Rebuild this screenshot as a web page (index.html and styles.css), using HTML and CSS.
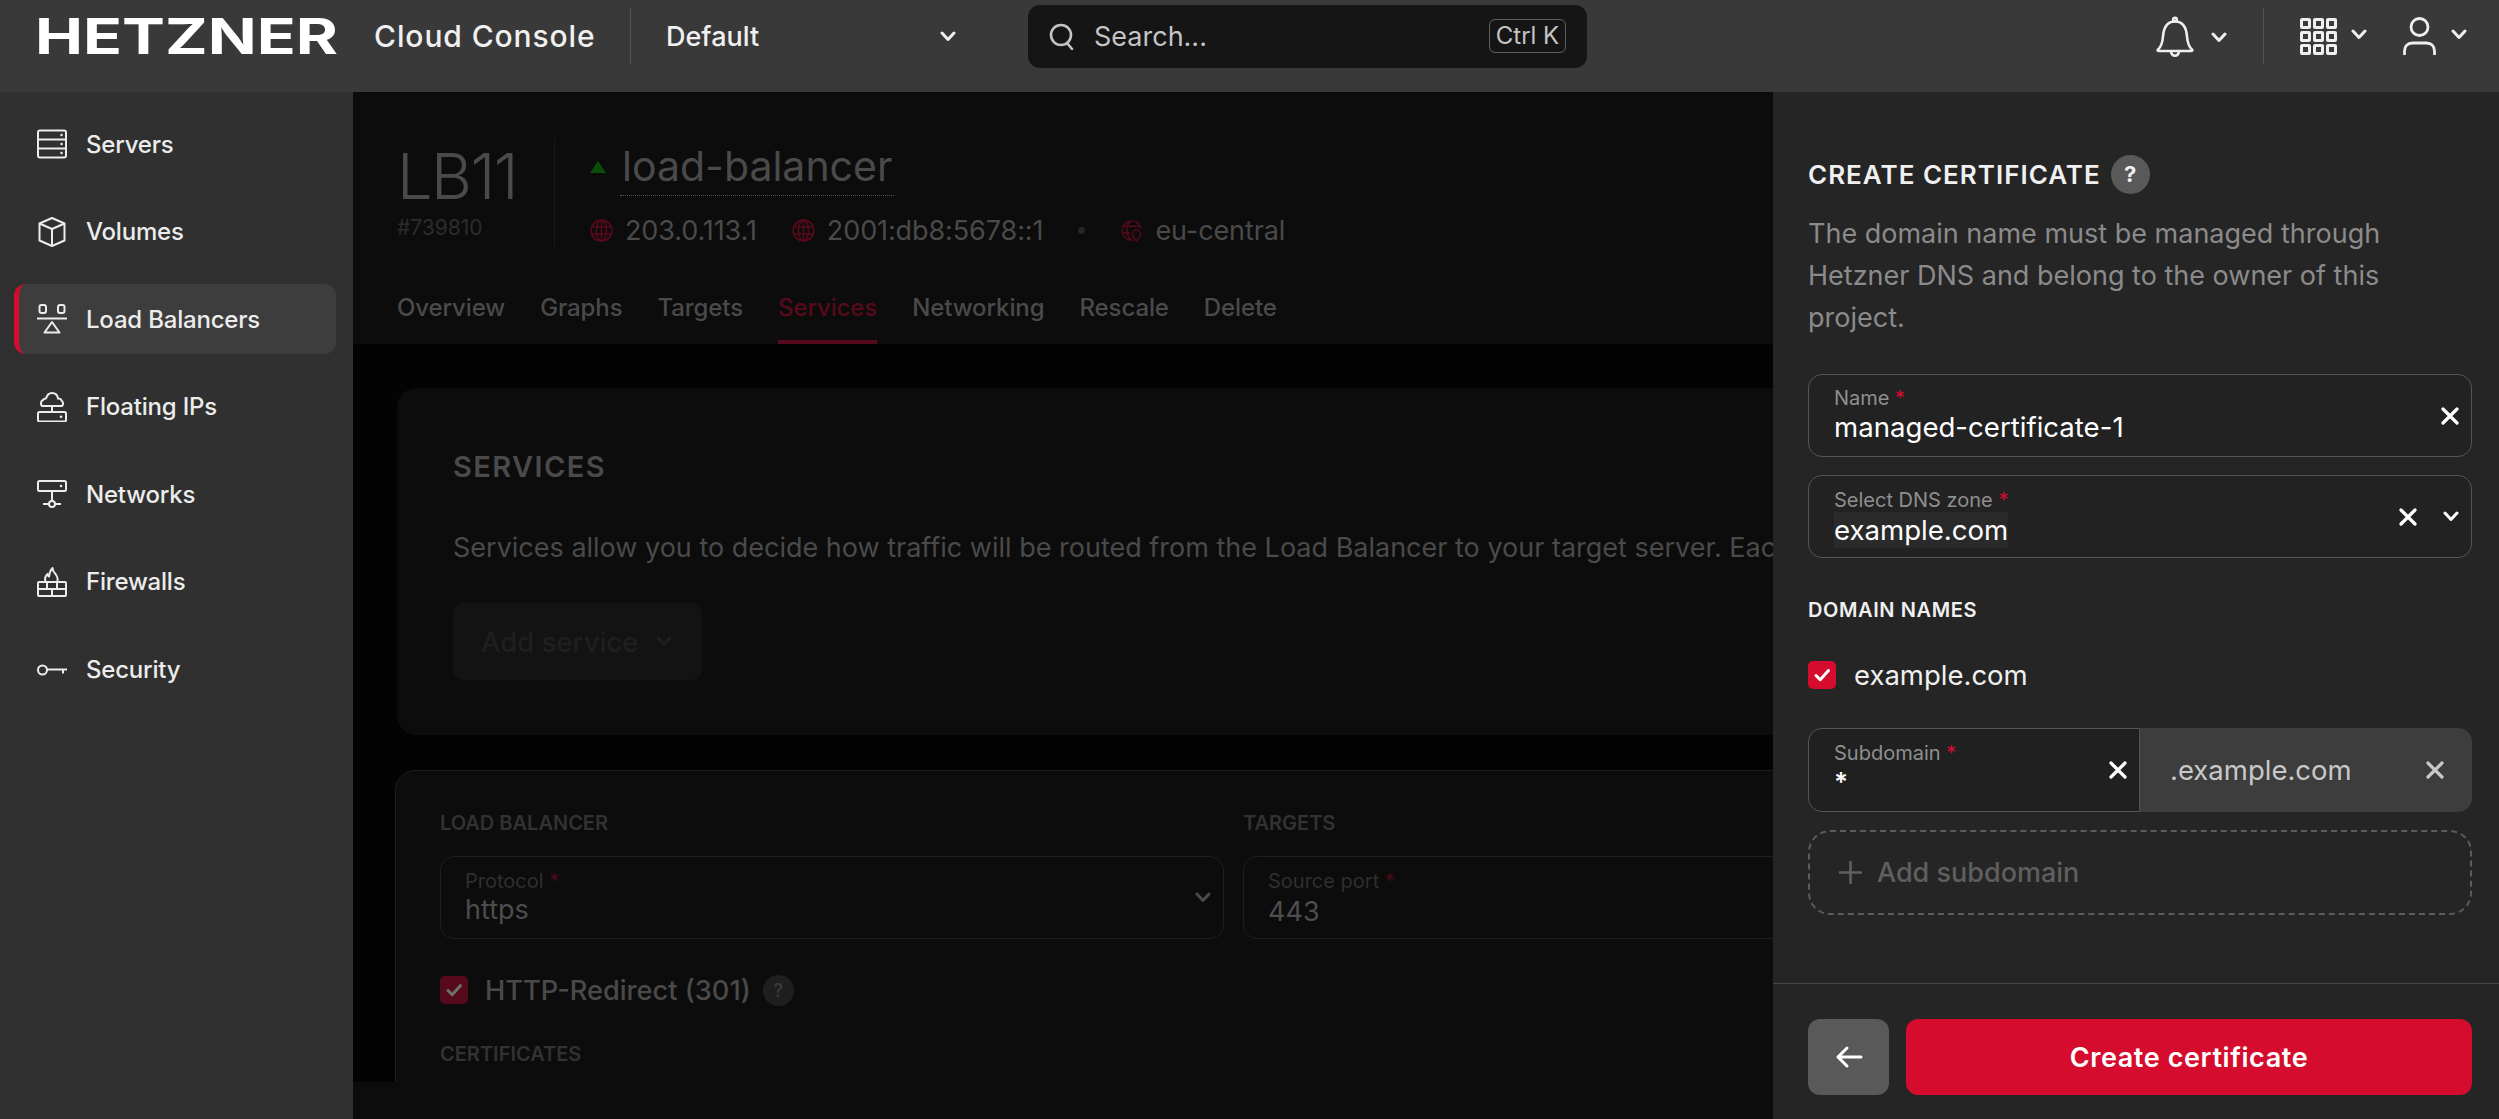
FILE: index.html
```html
<!DOCTYPE html>
<html lang="en">
<head>
  <meta charset="UTF-8">
  <title>Hetzner Cloud Console</title>
  <link rel="stylesheet" href="styles.css">
</head>
<body>
  <svg class="sprite" width="0" height="0">
    <symbol id="chev" viewBox="0 0 16 11"><path d="M2 2l6 6.5L14 2" fill="none" stroke="currentColor" stroke-width="3" stroke-linecap="round" stroke-linejoin="round"/></symbol>
    <symbol id="cross" viewBox="0 0 18 18"><path d="M2 2l14 14M16 2L2 16" fill="none" stroke="currentColor" stroke-width="3.2" stroke-linecap="round"/></symbol>
    <symbol id="tick" viewBox="0 0 28 28"><path d="M8 14.5l4.2 4.2L20.5 9.5" fill="none" stroke="currentColor" stroke-width="3" stroke-linecap="round" stroke-linejoin="round"/></symbol>
    <symbol id="globe" viewBox="0 0 23 23"><g fill="none" stroke="currentColor" stroke-width="1.6"><circle cx="11.5" cy="11.5" r="10.4"/><ellipse cx="11.5" cy="11.5" rx="5" ry="10.4"/><path d="M11.5 1v21M1.5 8h20M1.5 15h20"/></g></symbol>
  </svg>

  <header class="topbar">
    <svg class="logo" viewBox="0 0 303 36"><text x="0" y="36" textLength="303" lengthAdjust="spacingAndGlyphs">HETZNER</text></svg>
    <div class="product">Cloud Console</div>
    <div class="vline"></div>
    <div class="project">
      <span>Default</span>
      <svg class="chev"><use href="#chev"/></svg>
    </div>
    <div class="search">
      <svg class="search-icon" viewBox="0 0 26 27" fill="none" stroke="currentColor" stroke-width="2.6" stroke-linecap="round"><circle cx="12" cy="12" r="10"/><path d="M18 20l5 6"/></svg>
      <span class="search-text">Search...</span>
      <span class="kbd">Ctrl K</span>
    </div>
    <div class="top-right">
      <div class="top-group bell-group">
        <svg class="bell" viewBox="0 0 38 41" fill="none" stroke="currentColor" stroke-width="2.6" stroke-linejoin="round"><path d="M2 33.5c3.500-3 4.500-7 5-13C7.700 11 11 5.500 19 5.500S30.300 11 31 20.500c.5 6 1.500 10 5 13 .7.8.2 1.500-.8 1.500H2.800c-1 0-1.500-.7-.8-1.500z"/><path d="M15 36c.5 2.500 2 3.700 4 3.700s3.500-1.200 4-3.700"/><circle cx="19" cy="3.500" r="1.800"/></svg>
        <svg class="chev"><use href="#chev"/></svg>
      </div>
      <div class="vline"></div>
      <div class="top-group apps">
        <div class="app-grid">
          <i></i><i></i><i></i><i></i><i></i><i></i><i></i><i></i><i></i>
        </div>
        <svg class="chev"><use href="#chev"/></svg>
      </div>
      <div class="top-group">
        <svg class="user" viewBox="0 0 33 38" fill="none" stroke="currentColor" stroke-width="2.8" stroke-linecap="round"><circle cx="16.500" cy="10" r="8.500"/><path d="M1.500 37v-3c0-5 3-8 8-8h14c5 0 8 3 8 8v3"/></svg>
        <svg class="chev"><use href="#chev"/></svg>
      </div>
    </div>
  </header>

  <div class="layout">
    <nav class="sidebar">
      <a class="nav-item">
        <svg class="nav-icon" viewBox="0 0 30 30" fill="none" stroke="currentColor" stroke-width="2"><rect x="1" y="1.500" width="28" height="27" rx="2"/><path d="M1 10.500h28M1 19.500h28"/><path d="M24.500 6h.1M24.500 15h.1M24.500 24h.1" stroke-width="2.400" stroke-linecap="round"/></svg>
        Servers
      </a>
      <a class="nav-item">
        <svg class="nav-icon" viewBox="0 0 30 30" fill="none" stroke="currentColor" stroke-width="2" stroke-linejoin="round"><path d="M15 1l12.500 5.500v17L15 29 2.500 23.500v-17z"/><path d="M2.500 6.500L15 12l12.500-5.500M15 12v17"/></svg>
        Volumes
      </a>
      <a class="nav-item active">
        <svg class="nav-icon" viewBox="0 0 30 30" fill="none" stroke="currentColor" stroke-width="2"><rect x="2.500" y="1" width="6.500" height="8" rx="2"/><rect x="21" y="1" width="6.500" height="8" rx="2"/><path d="M0 14.500h30"/><path d="M15 18l7.500 10.500h-15z" stroke-linejoin="round"/></svg>
        Load Balancers
      </a>
      <a class="nav-item">
        <svg class="nav-icon" viewBox="0 0 30 30" fill="none" stroke="currentColor" stroke-width="2" stroke-linejoin="round"><path d="M5 14c-2-2-1-5 1-6 .5-1 1.500-1.500 3-1.500C10 3 12.500 1 15 1c3 0 5.500 2 6 5.500 2 0 3 .5 3.500 2 2 1.500 2 4 .5 5.500z"/><path d="M15 14v6"/><rect x="1" y="20" width="28" height="9.500" rx="1.500"/><path d="M24 24.700h.1" stroke-width="2.500" stroke-linecap="round"/></svg>
        Floating IPs
      </a>
      <a class="nav-item">
        <svg class="nav-icon" viewBox="0 0 30 30" fill="none" stroke="currentColor" stroke-width="2"><rect x="1" y="2" width="28" height="10" rx="1.500"/><path d="M24 7h.1" stroke-width="2.500" stroke-linecap="round"/><path d="M15 12v10M6 25h6M18 25h6"/><circle cx="15" cy="25" r="3"/></svg>
        Networks
      </a>
      <a class="nav-item">
        <svg class="nav-icon" viewBox="0 0 30 30" fill="none" stroke="currentColor" stroke-width="2" stroke-linejoin="round"><rect x="1" y="15" width="28" height="14" rx="1"/><path d="M1 22h28M10 15v7M20 15v7M15 22v7"/><path d="M9 15c-2-3-.5-6 1.500-8 0 1.500.5 2 1.500 2.500C12.500 6 13.500 3 15.500 1c0 3 1 4 3 6 2 2.500 3 5 1.500 8"/></svg>
        Firewalls
      </a>
      <a class="nav-item">
        <svg class="nav-icon" viewBox="0 0 30 30" fill="none" stroke="currentColor" stroke-width="2"><circle cx="5.500" cy="15" r="4.500"/><path d="M10 14.500h20M26 14.500v4"/></svg>
        Security
      </a>
    </nav>

    <main class="main">
      <section class="lb-header">
        <div class="lb-top">
          <div class="lb-type">
            <div class="lb-model">LB11</div>
            <div class="lb-id">#739810</div>
          </div>
          <div class="lb-info">
            <div class="lb-name-row">
              <span class="status-up"></span>
              <span class="lb-name">load-balancer</span>
            </div>
            <div class="lb-meta">
              <svg class="globe"><use href="#globe"/></svg>
              <span>203.0.113.1</span>
              <svg class="globe second"><use href="#globe"/></svg>
              <span>2001:db8:5678::1</span>
              <span class="meta-dot"></span>
              <svg class="globe" viewBox="0 0 23 25" fill="none" stroke="currentColor" stroke-width="1.600"><path d="M13 23a10.500 10.500 0 1 1 9-13M11 1.500c-6 5-6 16 0 21M1.500 8h19M1.500 15h8"/><path d="M17 24c-3-3.500-4.500-5.500-4.500-7.500a4.500 4.500 0 0 1 9 0c0 2-1.500 4-4.500 7.500z"/></svg>
              <span>eu-central</span>
            </div>
          </div>
        </div>
        <div class="tabs">
          <a class="tab">Overview</a>
          <a class="tab">Graphs</a>
          <a class="tab">Targets</a>
          <a class="tab active">Services</a>
          <a class="tab">Networking</a>
          <a class="tab">Rescale</a>
          <a class="tab">Delete</a>
        </div>
      </section>

      <section class="content">
        <div class="services-card">
          <h2 class="services-title">SERVICES</h2>
          <p class="services-text">Services allow you to decide how traffic will be routed from the Load Balancer to your target server. Each</p>
          <div class="add-service">
            Add service
            <svg class="chev"><use href="#chev"/></svg>
          </div>
        </div>

        <div class="service-card">
          <div class="service-cols">
            <div>
              <div class="service-head">LOAD BALANCER</div>
              <div class="dim-field">
                <div class="dim-text">
                  <div class="dim-label">Protocol <b>*</b></div>
                  <div class="dim-value">https</div>
                </div>
                <svg class="chev"><use href="#chev"/></svg>
              </div>
            </div>
            <div>
              <div class="service-head">TARGETS</div>
              <div class="dim-field">
                <div class="dim-text">
                  <div class="dim-label">Source port <b>*</b></div>
                  <div class="dim-value port">443</div>
                </div>
              </div>
            </div>
          </div>
          <div class="redirect-row">
            <span class="dim-check"><svg viewBox="0 0 28 28"><use href="#tick"/></svg></span>
            <span>HTTP-Redirect (301)</span>
            <span class="dim-help">?</span>
          </div>
          <div class="service-head certs">CERTIFICATES</div>
        </div>
      </section>

      <div class="main-foot"></div>
    </main>

    <aside class="panel">
      <div class="panel-body">
        <div class="panel-title">
          <h2>CREATE CERTIFICATE</h2>
          <span class="help">?</span>
        </div>
        <p class="panel-text">The domain name must be managed through Hetzner DNS and belong to the owner of this project.</p>

        <div class="field">
          <div class="field-text">
            <div class="field-label">Name <b>*</b></div>
            <div class="field-value name-value">managed-certificate-1</div>
          </div>
          <svg class="cross"><use href="#cross"/></svg>
        </div>

        <div class="field dns">
          <div class="field-text">
            <div class="field-label">Select DNS zone <b>*</b></div>
            <div class="field-value"><span class="picked">example.com</span></div>
          </div>
          <svg class="cross"><use href="#cross"/></svg>
          <svg class="chev"><use href="#chev"/></svg>
        </div>

        <h3 class="domain-head">DOMAIN NAMES</h3>

        <div class="check-row">
          <span class="check"><svg viewBox="0 0 28 28"><use href="#tick"/></svg></span>
          <span>example.com</span>
        </div>

        <div class="sub-row">
          <div class="field sub-field">
            <div class="field-text">
              <div class="field-label">Subdomain <b>*</b></div>
              <div class="field-value star">*</div>
            </div>
            <svg class="cross"><use href="#cross"/></svg>
          </div>
          <div class="sub-suffix">
            <span>.example.com</span>
            <svg class="cross"><use href="#cross"/></svg>
          </div>
        </div>

        <div class="add-sub">
          <svg class="plus" viewBox="0 0 25 25"><path d="M12.500 1v23M1 12.500h23" fill="none" stroke="currentColor" stroke-width="2.600"/></svg>
          Add subdomain
        </div>
      </div>

      <div class="panel-foot">
        <button class="btn-back">
          <svg viewBox="0 0 28 24" fill="none" stroke="currentColor" stroke-width="3" stroke-linecap="round" stroke-linejoin="round"><path d="M26 12H3M12 3l-9 9 9 9"/></svg>
        </button>
        <button class="btn-create">Create certificate</button>
      </div>
    </aside>
  </div>
</body>
</html>
```

FILE: styles.css
```css
* {
  box-sizing: border-box;
}

html, body {
  margin: 0;
  height: 100%;
  overflow: hidden;
}

body {
  font-family: Inter, "Liberation Sans", sans-serif;
  background: #0d0d0d;
  color: #f0f0f0;
  display: flex;
  flex-direction: column;
}

h2, h3, p {
  margin: 0;
}

.sprite {
  position: absolute;
}

.chev {
  width: 16px;
  height: 11px;
  flex: none;
}

/* top bar */
.topbar {
  height: 92px;
  flex: none;
  padding-bottom: 20px;
  background: #393939;
  display: flex;
  align-items: center;
}

.logo {
  margin-left: 35px;
  width: 303px;
  height: 36px;
  flex: none;
  overflow: visible;
}

.logo text {
  font-family: Inter, sans-serif;
  font-size: 49.5px;
  font-weight: 700;
  fill: #fff;
}

.product {
  margin-left: 36px;
  width: 221px;
  font-size: 30px;
  font-weight: 500;
  letter-spacing: 0.9px;
  white-space: nowrap;
}

.vline {
  width: 1px;
  height: 56px;
  background: #565656;
  flex: none;
}

.topbar > .vline {
  margin-left: 35px;
}

.project {
  width: 397px;
  padding: 0 72px 0 35px;
  font-size: 27px;
  font-weight: 500;
  display: flex;
  justify-content: space-between;
  align-items: center;
}

.search {
  width: 559px;
  height: 63px;
  padding: 0 21px;
  background: #151515;
  border-radius: 12px;
  display: flex;
  align-items: center;
  color: #c4c4c4;
}

.search-icon {
  width: 26px;
  height: 27px;
}

.search-text {
  margin-left: 19px;
  font-size: 27px;
  flex: 1;
}

.kbd {
  width: 77px;
  height: 34px;
  border: 1px solid #5f5f5f;
  border-radius: 6px;
  font-size: 24px;
  line-height: 32px;
  text-align: center;
}

.top-right {
  margin-left: auto;
  padding-right: 32px;
  display: flex;
  align-items: center;
  gap: 36px;
}

.top-group {
  display: flex;
  align-items: center;
  gap: 15px;
  color: #efefef;
}

.top-group .chev {
  margin-top: -3px;
}

.top-group.bell-group {
  gap: 17px;
}

.top-group.bell-group .chev {
  margin-top: 3px;
}

.top-group.apps {
  gap: 14px;
}

.bell {
  width: 38px;
  height: 41px;
}

.app-grid {
  width: 37px;
  height: 37px;
  display: grid;
  grid-template-columns: repeat(3, 11px);
  grid-template-rows: repeat(3, 11px);
  justify-content: space-between;
  align-content: space-between;
}

.app-grid i {
  border: 3.5px solid #efefef;
  border-radius: 2px;
}

.user {
  width: 33px;
  height: 38px;
}

/* page layout */
.layout {
  flex: 1;
  min-height: 0;
  display: flex;
}

.sidebar {
  width: 353px;
  flex: none;
  padding: 17px 17px 0 14px;
  background: #303030;
  display: flex;
  flex-direction: column;
  gap: 17.6px;
}

.nav-item {
  height: 70px;
  padding-left: 18px;
  border-left: 5px solid transparent;
  border-radius: 12px;
  display: flex;
  align-items: center;
  gap: 19px;
  font-size: 24px;
  font-weight: 450;
  letter-spacing: -0.2px;
  color: #ececec;
}

.nav-item.active {
  background: #3d3d3d;
  border-left-color: #d50c2d;
}

.nav-icon {
  width: 30px;
  height: 30px;
  flex: none;
}

/* dimmed load balancer page */
.main {
  flex: 1;
  min-width: 0;
  display: flex;
  flex-direction: column;
  overflow: hidden;
  color: #4a4a4a;
}

.lb-header {
  height: 252px;
  flex: none;
  padding: 46px 0 0 44px;
  background: #0c0c0c;
}

.lb-top {
  display: flex;
  height: 109px;
}

.lb-type {
  width: 158px;
  flex: none;
  border-right: 1px solid #191919;
}

.lb-model {
  margin-top: 6px;
  height: 64px;
  font-size: 63px;
  line-height: 64px;
  font-weight: 300;
  letter-spacing: -1.5px;
}

.lb-id {
  margin-top: 8px;
  font-size: 21px;
  line-height: 24px;
  color: #2c2c2c;
}

.lb-info {
  padding-left: 35px;
  display: flex;
  flex-direction: column;
  gap: 17px;
}

.lb-name-row {
  height: 58px;
  display: flex;
  align-items: flex-start;
}

.status-up {
  width: 0;
  height: 0;
  margin: 23px 14px 0 0;
  border-left: 8px solid transparent;
  border-right: 8px solid transparent;
  border-bottom: 12px solid #0a4d0a;
}

.lb-name {
  height: 58px;
  padding: 0 2px;
  border-bottom: 1px dotted #555;
  font-size: 41px;
  line-height: 56px;
}

.lb-meta {
  height: 36px;
  display: flex;
  align-items: center;
  font-size: 27px;
  letter-spacing: -0.1px;
  white-space: nowrap;
}

.globe {
  width: 23px;
  height: 23px;
  flex: none;
  margin-right: 12px;
  color: #560a1b;
}

.globe.second {
  margin-left: 35px;
}

.meta-dot {
  width: 7px;
  height: 7px;
  margin: 0 35px;
  border-radius: 50%;
  background: #262626;
}

.tabs {
  margin-top: 25px;
  height: 72px;
  display: flex;
  gap: 35px;
}

.tab {
  height: 72px;
  font-size: 24px;
  font-weight: 500;
  letter-spacing: -0.1px;
  line-height: 72px;
}

.tab.active {
  color: #570a1b;
  border-bottom: 4px solid #570a1b;
}

.content {
  flex: 1;
  min-height: 0;
  padding: 44px 0 0 42px;
  background: #030303;
  overflow: hidden;
}

.services-card {
  width: 1500px;
  height: 347px;
  margin-left: 2px;
  padding: 62px 0 0 56px;
  background: #0c0c0c;
  border-radius: 20px;
}

.services-title {
  font-size: 29px;
  line-height: 34px;
  font-weight: 600;
  letter-spacing: 1.4px;
}

.services-text {
  margin-top: 44px;
  font-size: 27px;
  line-height: 40px;
  white-space: nowrap;
}

.add-service {
  width: 249px;
  height: 77px;
  margin-top: 35px;
  padding-left: 28px;
  background: #131313;
  border-radius: 10px;
  display: flex;
  align-items: center;
  gap: 18px;
  font-size: 27.5px;
  font-weight: 500;
  color: #1f1f1f;
}

.service-card {
  width: 1500px;
  height: 400px;
  margin-top: 35px;
  padding: 40px 0 0 44px;
  background: #0c0c0c;
  border: 1px solid #1c1c1c;
  border-radius: 20px;
}

.service-cols {
  display: grid;
  grid-template-columns: 784px 600px;
  gap: 19px;
}

.service-head {
  font-size: 20px;
  line-height: 24px;
  font-weight: 600;
  color: #323232;
}

.dim-field {
  height: 83px;
  margin-top: 21px;
  padding-right: 12px;
  border: 1px solid #1e1e1e;
  border-radius: 14px;
  display: flex;
  align-items: center;
}

.dim-text {
  flex: 1;
  height: 81px;
  padding: 12px 0 0 24px;
}

.dim-label {
  font-size: 20px;
  line-height: 24px;
  color: #2f2f2f;
}

.dim-label b {
  color: #4c0a18;
  font-weight: 400;
}

.dim-value {
  font-size: 27px;
  line-height: 34px;
  color: #4d4d4d;
}

.dim-value.port {
  padding-top: 2px;
}

.redirect-row {
  margin-top: 35px;
  height: 32px;
  display: flex;
  align-items: center;
  font-size: 27.2px;
  font-weight: 500;
}

.dim-check {
  width: 28px;
  height: 28px;
  margin-right: 17px;
  background: #560a1b;
  border-radius: 5px;
  color: #6e6e6e;
}

.dim-check svg, .check svg {
  display: block;
  width: 28px;
  height: 28px;
}

.dim-help {
  width: 31px;
  height: 31px;
  margin-left: 12px;
  background: #1f1f1f;
  border-radius: 50%;
  font-size: 18px;
  line-height: 31px;
  text-align: center;
  color: #3c3c3c;
}

.certs {
  margin-top: 36px;
}

.main-foot {
  height: 37px;
  flex: none;
  background: #0c0c0c;
}

/* create certificate panel */
.panel {
  width: 726px;
  flex: none;
  background: #252525;
  display: flex;
  flex-direction: column;
}

.panel-body {
  flex: 1;
  padding: 63px 27px 0 35px;
}

.panel-title {
  height: 39px;
  display: flex;
  align-items: center;
  gap: 10px;
}

.panel-title h2 {
  font-size: 26px;
  font-weight: 600;
  letter-spacing: 1px;
  white-space: nowrap;
}

.help {
  width: 39px;
  height: 39px;
  background: #595959;
  border-radius: 50%;
  font-size: 22px;
  font-weight: 700;
  line-height: 39px;
  text-align: center;
}

.panel-text {
  margin-top: 19px;
  font-size: 27px;
  line-height: 42px;
  color: #8b8b8b;
}

.field {
  height: 83px;
  margin-top: 35px;
  padding-right: 12px;
  background: #222;
  border: 1px solid #555;
  border-radius: 14px;
  display: flex;
  align-items: center;
  color: #fff;
}

.field.dns {
  margin-top: 18px;
  gap: 26px;
}

.field-text {
  flex: 1;
  min-width: 0;
  height: 81px;
  padding: 11px 0 0 25px;
}

.field.dns .field-text {
  padding-top: 12px;
}

.field-label {
  font-size: 20px;
  line-height: 24px;
  color: #8f8f8f;
}

.field-label b {
  color: #d50c2d;
  font-weight: 400;
}

.field-value {
  font-size: 27.6px;
  line-height: 36px;
  color: #fff;
}

.name-value {
  margin-top: -1px;
}

.picked {
  display: inline-block;
  background: #2a2a2a;
}

.cross {
  width: 18px;
  height: 18px;
  flex: none;
}

.domain-head {
  margin-top: 40px;
  font-size: 20px;
  line-height: 24px;
  font-weight: 600;
  letter-spacing: 0.6px;
}

.check-row {
  margin-top: 39px;
  height: 28px;
  display: flex;
  align-items: center;
  gap: 18px;
  font-size: 27.5px;
}

.check {
  width: 28px;
  height: 28px;
  background: #d50c2d;
  border-radius: 5px;
  color: #fff;
}

.sub-row {
  margin-top: 39px;
  height: 84px;
  display: flex;
}

.sub-field {
  width: 332px;
  height: 84px;
  margin-top: 0;
  background: #202020;
  border-radius: 14px 0 0 14px;
}

.star {
  margin-top: -1px;
  font-size: 26px;
  font-weight: 600;
}

.sub-suffix {
  flex: 1;
  padding: 0 28px 0 30px;
  background: #3d3d3d;
  border-radius: 0 14px 14px 0;
  display: flex;
  align-items: center;
  justify-content: space-between;
  font-size: 27.5px;
  color: #c8c8c8;
}

.add-sub {
  height: 85px;
  margin-top: 18px;
  padding-left: 28px;
  border: 2.5px dashed #5c5c5c;
  border-radius: 22px;
  display: flex;
  align-items: center;
  gap: 14px;
  font-size: 27px;
  font-weight: 500;
  color: #5f5f5f;
}

.plus {
  width: 25px;
  height: 25px;
}

.panel-foot {
  height: 136px;
  flex: none;
  padding: 35px 27px 0 35px;
  border-top: 1px solid #484848;
  display: flex;
  gap: 17px;
}

.panel-foot button {
  height: 76px;
  border: 0;
  border-radius: 12px;
  color: #fff;
  font-family: inherit;
}

.btn-back {
  width: 81px;
  flex: none;
  background: #595959;
}

.btn-back svg {
  width: 28px;
  height: 24px;
  display: block;
  margin: 0 auto;
}

.btn-create {
  flex: 1;
  background: #d50c2d;
  font-size: 27px;
  font-weight: 600;
  letter-spacing: 0.6px;
}
```
